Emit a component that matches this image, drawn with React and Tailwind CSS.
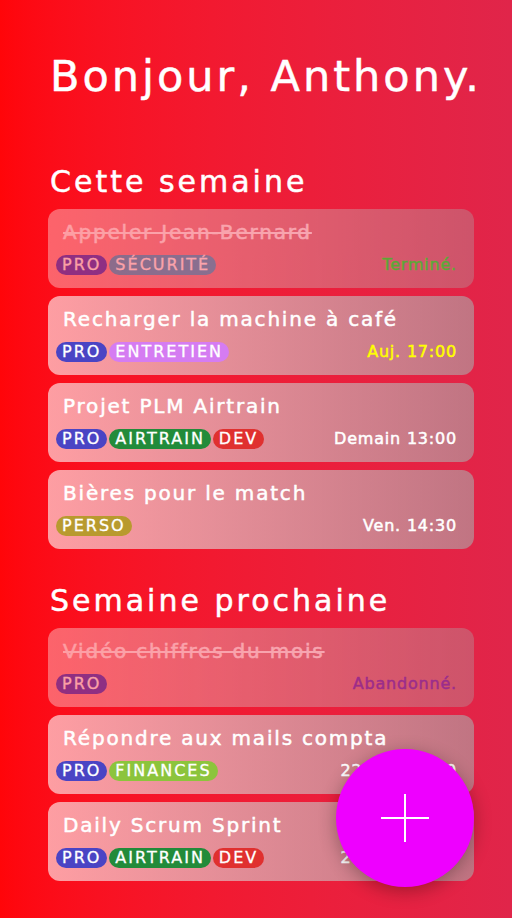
import React from 'react';

const tagColors = {
  PRO: 'bg-[#4a44c4]',
  'SÉCURITÉ': 'bg-[#45a8d0]',
  ENTRETIEN: 'bg-[#d57cf2]',
  AIRTRAIN: 'bg-[#228b3a]',
  DEV: 'bg-[#e0302f]',
  PERSO: 'bg-[#b89a2e]',
  FINANCES: 'bg-[#8cc43c]',
};

const thisWeek = [
  { title: 'Appeler Jean-Bernard', tags: ['PRO', 'SÉCURITÉ'], date: 'Terminé.', dateColor: 'text-[#00ff30]', faded: true },
  { title: 'Recharger la machine à café', tags: ['PRO', 'ENTRETIEN'], date: 'Auj. 17:00', dateColor: 'text-[#ffff00]' },
  { title: 'Projet PLM Airtrain', tags: ['PRO', 'AIRTRAIN', 'DEV'], date: 'Demain 13:00', dateColor: 'text-white' },
  { title: 'Bières pour le match', tags: ['PERSO'], date: 'Ven. 14:30', dateColor: 'text-white' },
];

const nextWeek = [
  { title: 'Vidéo chiffres du mois', tags: ['PRO'], date: 'Abandonné.', dateColor: 'text-[#6a35bc]', faded: true },
  { title: 'Répondre aux mails compta', tags: ['PRO', 'FINANCES'], date: '22 juil. 10:00', dateColor: 'text-white' },
  { title: 'Daily Scrum Sprint', tags: ['PRO', 'AIRTRAIN', 'DEV'], date: '24 juil. 09:30', dateColor: 'text-white' },
];

// DejaVu is a bit thin next to the rounded face in the mock, thicken it a little
const thick = '[-webkit-text-stroke:0.5px_currentColor]';

function TaskCard({ task }) {
  return (
    <div
      className={`rounded-xl bg-gradient-to-r from-[rgba(255,255,255,0.6)] to-[rgba(170,170,170,0.6)] pt-[9px] pb-[13px] px-2 ${
        task.faded ? 'opacity-60' : ''
      }`}
    >
      <div
        className={`whitespace-nowrap pl-[7px] text-[20px] leading-[28px] tracking-[1.8px] text-white ${thick} ${
          task.faded ? 'line-through' : ''
        }`}
      >
        {task.title}
      </div>
      <div className="mt-[9px] flex items-center justify-between">
        <div className="flex gap-[2px]">
          {task.tags.map((tag) => (
            <span
              key={tag}
              className={`h-5 rounded-full px-[6px] text-[16px] leading-5 tracking-[2px] text-white [-webkit-text-stroke:0.3px_currentColor] ${tagColors[tag]}`}
            >
              {tag}
            </span>
          ))}
        </div>
        <span className={`whitespace-nowrap pr-[9px] text-[16px] leading-5 tracking-[0.8px] ${thick} ${task.dateColor}`}>
          {task.date}
        </span>
      </div>
    </div>
  );
}

export default function App() {
  return (
    <div
      className="relative h-[918px] w-[512px] overflow-hidden bg-gradient-to-r from-[#ff0509] to-[#e0254a] text-white"
      style={{ fontFamily: '"DejaVu Sans", sans-serif' }}
    >
      <div className="px-12 pt-[46px]">
        <h1 className={`whitespace-nowrap pl-[2px] text-[43px] leading-[60px] tracking-[3px] ${thick}`}>
          Bonjour, Anthony.
        </h1>

        <h2 className={`mt-[56px] whitespace-nowrap pl-[2px] text-[30px] leading-[40px] tracking-[3px] ${thick}`}>
          Cette semaine
        </h2>
        <div className="mt-[7px] flex w-[426px] flex-col gap-2">
          {thisWeek.map((t) => (
            <TaskCard key={t.title} task={t} />
          ))}
        </div>

        <h2 className={`mt-[32px] whitespace-nowrap pl-[2px] text-[30px] leading-[40px] tracking-[3px] ${thick}`}>
          Semaine prochaine
        </h2>
        <div className="mt-[7px] flex w-[426px] flex-col gap-2">
          {nextWeek.map((t) => (
            <TaskCard key={t.title} task={t} />
          ))}
        </div>
      </div>

      <button className="absolute left-[336px] top-[749px] flex h-[138px] w-[138px] items-center justify-center rounded-full bg-[#ee00ff] shadow-[0_4px_18px_rgba(0,0,0,0.3)]">
        <svg width="48" height="48" viewBox="0 0 48 48">
          <path d="M24 0 V48 M0 24 H48" stroke="white" strokeWidth="2" />
        </svg>
      </button>
    </div>
  );
}
